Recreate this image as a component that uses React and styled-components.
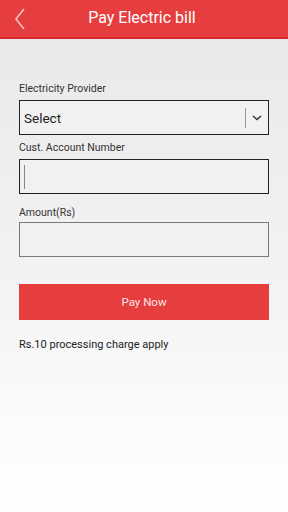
import React from 'react';
import styled, { createGlobalStyle } from 'styled-components';

const Global = createGlobalStyle`
  html, body { margin: 0; padding: 0; }
  body { font-family: Roboto, "Liberation Sans", sans-serif; }
`;

const Screen = styled.div`
  width: 288px;
  height: 512px;
  overflow: hidden;
  background: linear-gradient(to bottom, #e8e8e8 0%, #f3f3f3 55%, #fcfcfc 85%, #ffffff 100%);
  display: flex;
  flex-direction: column;
`;

const Header = styled.div`
  height: 37px;
  background: #e63d3f;
  border-bottom: 2px solid #d22a2d;
  display: flex;
  align-items: center;
`;

const Back = styled.div`
  width: 40px;
  height: 37px;
  display: flex;
  align-items: center;
  justify-content: center;
`;

const Title = styled.div`
  flex: 1;
  text-align: center;
  margin-right: 40px;
  margin-left: -4px;
  color: #ffffff;
  font-size: 16px;
  padding-bottom: 2px;
`;

const Form = styled.div`
  padding: 42px 19px 0 19px;
  display: flex;
  flex-direction: column;
`;

const Label = styled.div`
  font-size: 10.5px;
  color: #333;
  height: 15px;
  line-height: 15px;
  margin-top: ${p => p.$top || 0}px;
  margin-bottom: ${p => (p.$bottom == null ? 4 : p.$bottom)}px;
`;

const Box = styled.div`
  height: 33px;
  border: 1px solid ${p => (p.$dark ? '#222' : '#7a7a7a')};
  background: #f1f1f1;
  display: flex;
  align-items: center;
`;

const SelectText = styled.div`
  flex: 1;
  font-size: 13.5px;
  color: #222;
  padding-left: 4px;
`;

const Divider = styled.div`
  width: 1px;
  height: 20px;
  background: #9a9a9a;
`;

const Chevron = styled.div`
  width: 22px;
  display: flex;
  align-items: center;
  justify-content: center;
`;

const Cursor = styled.div`
  width: 1px;
  height: 24px;
  background: #888;
  margin-left: 4px;
`;

const Button = styled.div`
  margin-top: 27px;
  height: 36px;
  background: #e63d3f;
  color: #fbe6e6;
  font-size: 11.5px;
  display: flex;
  align-items: center;
  justify-content: center;
`;

const Note = styled.div`
  margin-top: 18px;
  font-size: 11px;
  color: #222;
`;

export default function App() {
  return (
    <Screen>
      <Global />
      <Header>
        <Back>
          <svg width="12" height="22" viewBox="0 0 12 22">
            <path d="M10 1 L2 11 L10 21" fill="none" stroke="#f6c3c3" strokeWidth="1.6" />
          </svg>
        </Back>
        <Title>Pay Electric bill</Title>
      </Header>
      <Form>
        <Label>Electricity Provider</Label>
        <Box $dark>
          <SelectText>Select</SelectText>
          <Divider />
          <Chevron>
            <svg width="10" height="6" viewBox="0 0 10 6">
              <path d="M1 1 L5 4.5 L9 1" fill="none" stroke="#333" strokeWidth="1.5" />
            </svg>
          </Chevron>
        </Box>
        <Label $top={5}>Cust. Account Number</Label>
        <Box $dark>
          <Cursor />
        </Box>
        <Label $top={11} $bottom={2}>Amount(Rs)</Label>
        <Box />
        <Button>Pay Now</Button>
        <Note>Rs.10 processing charge apply</Note>
      </Form>
    </Screen>
  );
}
